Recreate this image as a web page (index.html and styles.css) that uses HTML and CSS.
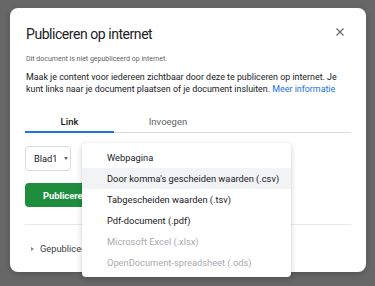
FILE: index.html
```html
<!DOCTYPE html>
<html lang="nl">
<head>
    <meta charset="UTF-8">
    <meta name="viewport" content="width=device-width, initial-scale=1.0">
    <title>Publiceren op internet</title>
    <link rel="stylesheet" href="styles.css">
</head>
<body>
    <div class="dialog">
        <div class="dialog-header">
            <h1>Publiceren op internet</h1>
            <button class="close" aria-label="Sluiten">
                <svg width="8" height="8" viewBox="0 0 8 8"><path d="M0.5 0.5 L7.5 7.5 M7.5 0.5 L0.5 7.5" stroke="#5f6368" stroke-width="1.1" fill="none"/></svg>
            </button>
        </div>
        <p class="status">Dit document is niet gepubliceerd op internet.</p>
        <p class="intro">Maak je content voor iedereen zichtbaar door deze te publiceren op internet. Je kunt links naar je document plaatsen of je document insluiten. <a href="#">Meer informatie</a></p>

        <div class="tabs">
            <div class="tab active">Link</div>
            <div class="tab">Invoegen</div>
        </div>

        <div class="options">
            <div class="select">Blad1 <span class="caret"></span></div>
        </div>
        <button class="publish">Publiceren</button>

        <div class="divider"></div>
        <div class="expander"><span class="arrow"></span>Gepubliceerde inhoud en instellingen</div>

        <!-- menu ligt over de rest -->
        <ul class="menu">
            <li>Webpagina</li>
            <li class="hover">Door komma's gescheiden waarden (.csv)</li>
            <li>Tabgescheiden waarden (.tsv)</li>
            <li>Pdf-document (.pdf)</li>
            <li class="disabled">Microsoft Excel (.xlsx)</li>
            <li class="disabled">OpenDocument-spreadsheet (.ods)</li>
        </ul>
    </div>
</body>
</html>
```

FILE: styles.css
```css
* {
    box-sizing: border-box;
    margin: 0;
    padding: 0;
}
body {
    background: #676767;
    font-family: Roboto, 'Liberation Sans', Arial, sans-serif;
    color: #202124;
    padding: 8px 9px 0 10px;
    height: 286px;
    overflow: hidden;
}
.dialog {
    position: relative;
    background: #fff;
    border-radius: 8px;
    width: 356px;
    height: 264px;
    padding: 16px 15px 0 15px;
    box-shadow: 0 2px 6px rgba(0, 0, 0, 0.2);
}
.dialog-header {
    display: flex;
    justify-content: space-between;
    align-items: center;
    height: 20px;
}
h1 {
    font-size: 14px;
    font-weight: 400;
    line-height: 20px;
    padding-left: 1px;
    letter-spacing: -0.45px;
}
.close {
    background: none;
    border: none;
    width: 8px;
    height: 8px;
    margin-right: 7px;
    margin-top: -4px;
    display: flex;
}
.status {
    margin-top: 10px;
    font-size: 7px;
    line-height: 10px;
    color: #5f6368;
    padding-left: 1px;
}
.intro {
    margin-top: 7px;
    font-size: 8.9px;
    line-height: 12px;
    padding-left: 1px;
}
.intro a {
    color: #1a73e8;
    text-decoration: none;
}
.tabs {
    display: flex;
    margin-top: 18px;
    border-bottom: 1px solid #dadce0;
    height: 20px;
}
.tab {
    font-size: 9.5px;
    line-height: 18px;
    text-align: center;
    color: #5f6368;
    width: 108px;
}
.tab.active {
    width: 89px;
    color: #202124;
    font-weight: 500;
    border-bottom: 2px solid #1a73e8;
    margin-bottom: -1px;
}
.options {
    margin-top: 13px;
    display: flex;
}
.select {
    display: flex;
    align-items: center;
    gap: 6px;
    height: 25px;
    width: 46px;
    padding-left: 8px;
    border: 1px solid #dadce0;
    border-radius: 4px;
    font-size: 9.3px;
}
.caret {
    width: 0;
    height: 0;
    border-left: 2.5px solid transparent;
    border-right: 2.5px solid transparent;
    border-top: 3px solid #5f6368;
}
.publish {
    display: block;
    margin-top: 12px;
    height: 24px;
    padding: 0 18px;
    border: none;
    border-radius: 4px;
    background: #1e8e3e;
    color: #fff;
    font-family: inherit;
    font-size: 9.3px;
    font-weight: 700;
}
.divider {
    margin-top: 17px;
    border-top: 1px solid #e8eaed;
}
.expander {
    display: flex;
    align-items: center;
    margin-top: 18px;
    font-size: 9.3px;
    line-height: 12px;
    color: #3c4043;
}
.arrow {
    width: 0;
    height: 0;
    margin: 0 6px 0 6px;
    border-top: 2.5px solid transparent;
    border-bottom: 2.5px solid transparent;
    border-left: 3px solid #80868b;
}
.menu {
    position: absolute;
    left: 72px;
    top: 135px;
    width: 209px;
    list-style: none;
    background: #fff;
    border-radius: 4px;
    padding: 4px 0;
    box-shadow: 0 2px 6px rgba(0, 0, 0, 0.18), 0 0 1px rgba(0, 0, 0, 0.12);
}
.menu li {
    height: 21px;
    line-height: 21px;
    padding-left: 25px;
    font-size: 9.3px;
    color: #202124;
}
.menu li.hover {
    background: #f1f3f4;
}
.menu li.disabled {
    color: #a8abaf;
}
```
